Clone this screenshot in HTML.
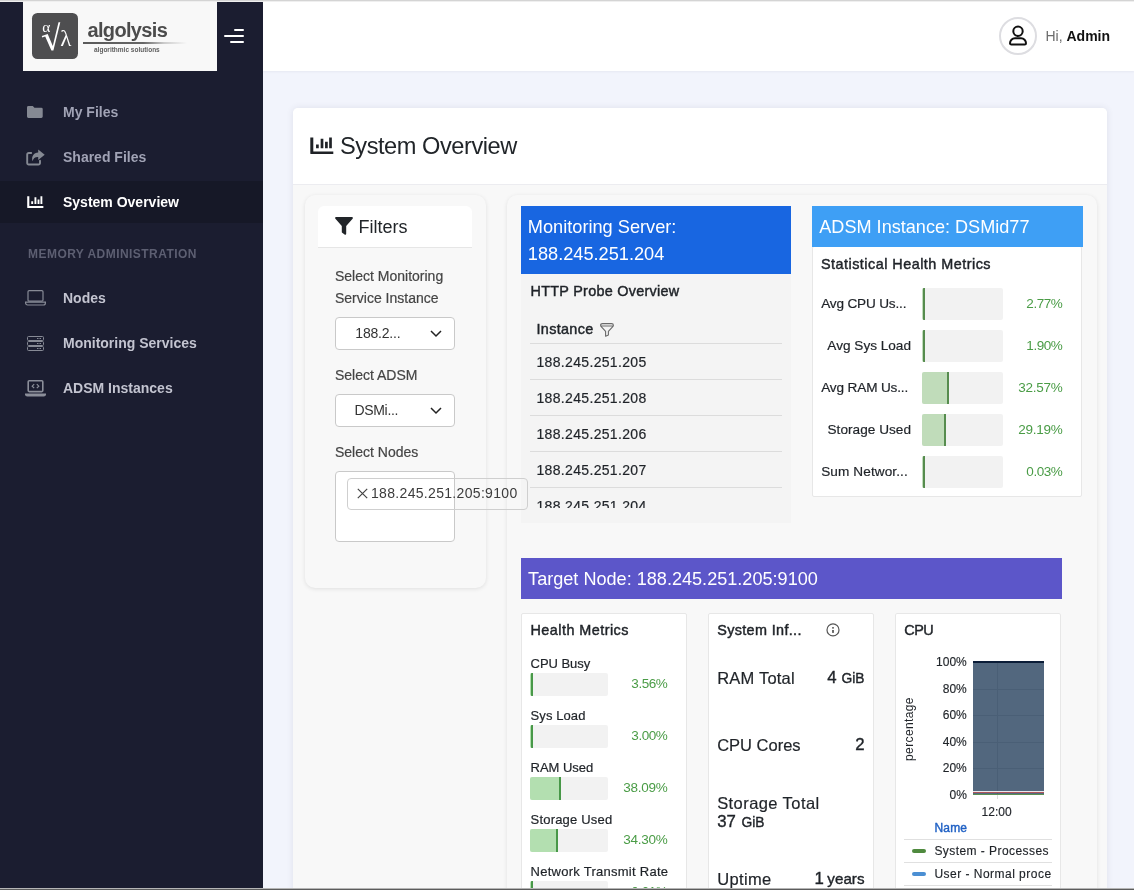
<!DOCTYPE html>
<html>
<head>
<meta charset="utf-8">
<title>System Overview</title>
<style>
*{box-sizing:border-box;margin:0;padding:0}
html,body{width:1134px;height:890px;overflow:hidden}
body{font-family:"Liberation Sans",sans-serif;background:#f2f4fc;position:relative;color:#212529}
#wrap{position:absolute;left:0;top:0;width:1134px;height:890px;overflow:hidden;will-change:transform}
.abs{position:absolute}
.t{position:absolute;white-space:nowrap;line-height:1}
/* sidebar */
#side{left:0;top:0;width:263px;height:890px;background:#1b1d30}
#logo{left:23px;top:2px;width:194px;height:69px;background:#f8f8f8}
#active{left:0;top:181px;width:263px;height:42px;background:#161827}
.mi{font-weight:bold;font-size:14px;color:#a1a3b5;left:63px}
.mi2{font-weight:bold;font-size:14px;color:#c3c4d0;left:63px}
/* header */
#hdr{left:263px;top:0;width:871px;height:71px;background:#fff;box-shadow:0 1px 2px rgba(80,90,120,.07)}
#topline{left:0;top:0;width:1134px;height:1px;background:#d4d4d4;z-index:50}
#topline2{left:0;top:1px;width:1134px;height:1px;background:#efefef;z-index:50}
#botline{left:0;top:888px;width:1134px;height:2px;background:linear-gradient(#b5b5b5 0,#b5b5b5 50%,#5c5c5c 50%,#5c5c5c 100%);z-index:50}
/* card */
#card{left:293px;top:108px;width:814px;height:800px;background:#f8f8f8;border-radius:5px;box-shadow:0 0 7px rgba(60,60,90,.11)}
#cardh{left:0;top:0;width:814px;height:77px;background:#fff;border-radius:5px 5px 0 0;border-bottom:1px solid #ececf0}
.sub{background:#f8f8f8;border-radius:10px;box-shadow:0 1px 4px rgba(0,0,0,.10)}
.lbl{font-size:14px;color:#444;-webkit-text-stroke:.2px #444}
.sel{background:#fff;border:1px solid #c9c9c9;border-radius:4px}
.pt{font-size:14.4px;color:#1f2328;-webkit-text-stroke:.45px #1f2328}
.panel{background:#fff;border:1px solid #e7e7e7;border-radius:2px}
.bar{background:#f2f2f2;border-radius:2px;overflow:hidden}
.fill{position:absolute;left:0;top:0;height:100%;background:#c0dcba;border-right:2.3px solid #568c4e}
.gl{font-size:14px;color:#1f2328;-webkit-text-stroke:.2px #1f2328}
.gv{font-size:14px;color:#4a9c46;text-align:right}
.row{font-size:14px;letter-spacing:.33px;color:#1f2328;-webkit-text-stroke:.2px #1f2328}
.hl{height:1px;background:#dcdcdc}
.si{font-size:16.5px;color:#1f2328;-webkit-text-stroke:.2px #1f2328}
.sv{font-size:16.8px;color:#1f2328;text-align:right;-webkit-text-stroke:.38px #1f2328}
.sv .u{font-size:13.8px}
.sv .u2{font-size:15.2px}
.yl{font-size:12px;color:#1f2328;text-align:right;-webkit-text-stroke:.15px #1f2328}
.lg{font-size:12px;color:#1f2328;letter-spacing:.44px;-webkit-text-stroke:.15px #1f2328}
.gl{font-size:13.6px}
.hl2{font-size:13px}
.f2{background:#b3dfb0;border-right:2.3px solid #489848}
.gv{font-size:13.5px;letter-spacing:-.45px}

</style>
</head>
<body>
<div id="wrap">
<!-- SIDEBAR -->
<div id="side" class="abs">
  <div id="logo" class="abs">
    <div class="abs" style="left:9px;top:10.5px;width:46.3px;height:46.5px;background:#4e4e50;border-radius:5.5px"></div>
    <svg class="abs" style="left:9px;top:10.5px" width="47" height="47" viewBox="0 0 47 47">
      <text x="10.2" y="18.9" font-family="Liberation Serif" font-size="15.5" fill="#fff">α</text>
      <path d="M9.800 23 L15.700 21 L20.800 33 L26.500 9.300 L28.300 9.300 L21.400 37.400 L19.400 37.400 L13.200 23.600 L10.200 24.600 Z" fill="#fff"/>
      <text x="28.2" y="32.9" font-family="Liberation Serif" font-size="23" fill="#fff">λ</text>
    </svg>
    <div class="t" style="left:64.5px;top:17.6px;font-size:20px;font-weight:bold;color:#4c4c4c;letter-spacing:-0.66px">algolysis</div>
    <div class="abs" style="left:59.5px;top:40.2px;width:104px;height:1.5px;background:linear-gradient(90deg,#5a5a5a 0%,#666 58%,rgba(120,120,120,.35) 78%,rgba(120,120,120,0) 100%)"></div>
    <div class="t" style="left:71px;top:45.3px;font-size:6.5px;font-weight:bold;color:#5e5e5e">algorithmic solutions</div>
  </div>
  <!-- hamburger -->
  <div class="abs" style="left:234px;top:29px;width:10.2px;height:2.1px;border-radius:1px;background:#fff"></div>
  <div class="abs" style="left:223.8px;top:35px;width:20.4px;height:2.1px;border-radius:1px;background:#fff"></div>
  <div class="abs" style="left:229.8px;top:41px;width:14.4px;height:2.1px;border-radius:1px;background:#fff"></div>

  <div id="active" class="abs"></div>

  <!-- icons -->
  <svg class="abs" style="left:27.2px;top:105.8px" width="16.2" height="12.2" viewBox="0 0 17 13" preserveAspectRatio="none"><path d="M1.500 0h4.600l1.700 1.800h7.200A1.500 1.500 0 0 1 16.500 3.300v7.900a1.500 1.500 0 0 1-1.500 1.500H1.500A1.500 1.500 0 0 1 0 11.200V1.500A1.500 1.500 0 0 1 1.500 0z" fill="#858993"/></svg>
  <svg class="abs" style="left:25.5px;top:148.5px" width="19" height="17" viewBox="0 0 19 17"><path d="M5.200 4h-2.500a1.500 1.500 0 0 0-1.500 1.500v8.500a1.500 1.500 0 0 0 1.500 1.500h9.800a1.500 1.500 0 0 0 1.500-1.500v-2.200" fill="none" stroke="#858993" stroke-width="1.900" stroke-linecap="round"/><path d="M12.200 0.400L18.700 5.700 12.200 11V7.900C9 7.800 7.200 9 6.600 12.300 5.000 7.500 7.800 3.900 12.200 3.600z" fill="#858993"/></svg>
  <svg class="abs" style="left:27px;top:196px" width="16.500" height="12.300" viewBox="0 0 23.500 17.500"><path d="M1.800 0.400V15.900H23.300" fill="none" stroke="#fff" stroke-width="3" stroke-linejoin="round"/><path d="M7.400 7.600V11.300M12 1.800V11.300M16.400 4.800V11.300M20.500 0.500V11.300" fill="none" stroke="#fff" stroke-width="2.700"/></svg>

  <div class="t mi" style="top:105px">My Files</div>
  <div class="t mi" style="top:150px">Shared Files</div>
  <div class="t mi" style="top:195px;color:#fff">System Overview</div>
  <div class="t" style="left:28px;top:248px;font-size:12px;font-weight:bold;color:#5d5f72;letter-spacing:.46px">MEMORY ADMINISTRATION</div>
  <div class="t mi2" style="top:291px">Nodes</div>
  <div class="t mi2" style="top:336px">Monitoring Services</div>
  <div class="t mi2" style="top:381px">ADSM Instances</div>

  <!-- laptop -->
  <svg class="abs" style="left:25px;top:290px" width="21" height="16" viewBox="0 0 21 16"><rect x="3" y="0.600" width="15" height="10.500" rx="1.200" fill="none" stroke="#878a95" stroke-width="1.200"/><path d="M0.600 12.200h19.800v0.800a2 2 0 0 1-2 2H2.600a2 2 0 0 1-2-2z" fill="none" stroke="#878a95" stroke-width="1.200"/></svg>
  <!-- server -->
  <svg class="abs" style="left:27px;top:335.500px" width="17" height="15" viewBox="0 0 17 15"><g fill="none" stroke="#878a95" stroke-width="1"><rect x="0.500" y="0.500" width="16" height="4" rx="1"/><rect x="0.500" y="5.500" width="16" height="4" rx="1"/><rect x="0.500" y="10.500" width="16" height="4" rx="1"/></g><g fill="#878a95"><rect x="10" y="2" width="1.500" height="1"/><rect x="12.500" y="2" width="1.500" height="1"/><rect x="10" y="7" width="1.500" height="1"/><rect x="12.500" y="7" width="1.500" height="1"/><rect x="10" y="12" width="1.500" height="1"/><rect x="12.500" y="12" width="1.500" height="1"/></g></svg>
  <!-- laptop code -->
  <svg class="abs" style="left:25px;top:380px" width="21" height="17" viewBox="0 0 21 17"><rect x="3.200" y="0.800" width="14.600" height="10.800" rx="1" fill="none" stroke="#8b8e99" stroke-width="1.600"/><path d="M0 13.500h21v0.700a2.300 2.300 0 0 1-2.300 2.300H2.300A2.300 2.300 0 0 1 0 14.200z" fill="#8b8e99"/><path d="M9.200 4.200L7.200 6.200l2 2M11.800 4.200l2 2-2 2" fill="none" stroke="#8b8e99" stroke-width="1.200"/></svg>
</div>

<!-- HEADER -->
<div id="hdr" class="abs"></div>
<div class="abs" style="left:999px;top:17px;width:38px;height:38px;border-radius:50%;border:2px solid #dddde1;background:#fff"></div>
<svg class="abs" style="left:1008px;top:24px" width="20" height="23" viewBox="0 0 20 23"><circle cx="10" cy="7.300" r="4.700" fill="none" stroke="#111" stroke-width="2"/><path d="M2 19.2a4.900 4.900 0 0 1 4.900-4.900h6.200a4.900 4.900 0 0 1 4.900 4.900a1.300 1.300 0 0 1-1.300 1.300H3.300A1.300 1.300 0 0 1 2 19.200z" fill="none" stroke="#111" stroke-width="2" stroke-linejoin="round"/></svg>
<div class="t" style="left:1045.500px;top:29px;font-size:14px;color:#6c6c6c">Hi, <b style="color:#111">Admin</b></div>

<div id="topline" class="abs"></div><div id="topline2" class="abs"></div>

<!-- MAIN CARD -->
<div id="card" class="abs">
  <div id="cardh" class="abs"></div>
</div>
<svg class="abs" style="left:310px;top:136.5px" width="23.5" height="17.5" viewBox="0 0 23.500 17.500"><path d="M1.800 0.400V15.900H23.300" fill="none" stroke="#1f2226" stroke-width="3" stroke-linejoin="round"/><path d="M7.400 7.600V11.300M12 1.800V11.300M16.400 4.800V11.300M20.500 0.500V11.300" fill="none" stroke="#1f2226" stroke-width="2.700"/></svg>
<div class="t" style="left:340px;top:135px;font-size:23.6px;letter-spacing:-.45px;color:#212529">System Overview</div>

<!-- FILTER CARD -->
<div class="abs sub" style="left:304.500px;top:194.500px;width:181.500px;height:393px"></div>
<div class="abs" style="left:318px;top:206px;width:154px;height:42px;background:#fff;border-radius:6px 6px 0 0;border-bottom:1px solid #e6e6e6"></div>
<svg class="abs" style="left:335px;top:217px" width="18" height="18" viewBox="0 0 18 18"><path d="M1.200 0h15.600a1 1 0 0 1 .8 1.700L11.200 9v7.800a1 1 0 0 1-1.600.8l-2.400-1.900a1 1 0 0 1-.4-.8V9L0.400 1.700A1 1 0 0 1 1.200 0z" fill="#212529"/></svg>
<div class="t" style="left:358.500px;top:217.500px;font-size:18px;color:#212529">Filters</div>

<div class="t lbl" style="left:335px;top:269px">Select Monitoring</div>
<div class="t lbl" style="left:335px;top:290.7px">Service Instance</div>
<div class="abs sel" style="left:335px;top:317px;width:120px;height:33px"></div>
<div class="t" style="left:355.3px;top:326.4px;font-size:14px;letter-spacing:-.2px;color:#333">188.2...</div>
<svg class="abs" style="left:430px;top:329.500px" width="12" height="8" viewBox="0 0 12 8"><path d="M1 1l5 5 5-5" fill="none" stroke="#222" stroke-width="1.500"/></svg>

<div class="t lbl" style="left:335px;top:368.1px">Select ADSM</div>
<div class="abs sel" style="left:335px;top:394px;width:120px;height:33px"></div>
<div class="t" style="left:354.4px;top:403.1px;font-size:14px;letter-spacing:-.3px;color:#333">DSMi...</div>
<svg class="abs" style="left:430px;top:406.500px" width="12" height="8" viewBox="0 0 12 8"><path d="M1 1l5 5 5-5" fill="none" stroke="#222" stroke-width="1.500"/></svg>

<div class="t lbl" style="left:335px;top:444.5px">Select Nodes</div>
<div class="abs sel" style="left:335px;top:471px;width:120px;height:71px"></div>

<!-- RIGHT CARD -->
<div class="abs sub" style="left:506.500px;top:194.500px;width:590.500px;height:760px"></div>

<!-- Monitoring server -->
<div class="abs" style="left:521px;top:274px;width:270px;height:249px;background:#f4f4f4"></div>
<div class="abs" style="left:521px;top:206px;width:270px;height:68px;background:#1866e1"></div>
<div class="t" style="left:527.8px;top:218px;font-size:18.2px;color:#fff">Monitoring Server:</div>
<div class="t" style="left:527.8px;top:245px;font-size:18.2px;color:#fff">188.245.251.204</div>
<div class="t pt" style="left:530.5px;top:283.7px;letter-spacing:.28px">HTTP Probe Overview</div>
<div class="t pt" style="left:536.5px;top:321.7px;letter-spacing:.33px">Instance</div>
<svg class="abs" style="left:600px;top:323px" width="14" height="14" viewBox="0 0 14 14"><path d="M2.500 0.600H11.500Q13.400 0.600 13.400 2.200Q13.400 3 12.800 3.600L8.400 8.400V12L5.600 13.200V8.400L1.200 3.600Q0.600 3 0.600 2.200Q0.600 0.600 2.500 0.600ZM1.200 3H12.800" fill="none" stroke="#6a6a6a" stroke-width="1.100" stroke-linejoin="round"/></svg>
<div class="abs hl" style="left:530px;top:343px;width:252px"></div>
<div class="abs hl" style="left:530px;top:379px;width:252px"></div>
<div class="abs hl" style="left:530px;top:415px;width:252px"></div>
<div class="abs hl" style="left:530px;top:451px;width:252px"></div>
<div class="abs hl" style="left:530px;top:487px;width:252px"></div>
<div class="t row" style="left:536.500px;top:355px">188.245.251.205</div>
<div class="t row" style="left:536.500px;top:391px">188.245.251.208</div>
<div class="t row" style="left:536.500px;top:427px">188.245.251.206</div>
<div class="t row" style="left:536.500px;top:463px">188.245.251.207</div>
<div class="abs" style="left:530px;top:488px;width:252px;height:20px;overflow:hidden"><div class="t row" style="left:6.500px;top:11px">188.245.251.204</div></div>

<!-- node tag (over monitoring panel) -->
<div class="abs" style="left:347px;top:477.500px;width:180.500px;height:32px;border:1px solid #cfcfcf;border-radius:4px"></div>
<svg class="abs" style="left:356.500px;top:487.500px" width="11" height="11" viewBox="0 0 11 11"><path d="M0.800 0.800l9.400 9.400M10.200 0.800L0.800 10.200" fill="none" stroke="#444" stroke-width="1.200"/></svg>
<div class="t" style="left:371px;top:486.1px;font-size:14px;letter-spacing:.32px;color:#3c3c3c">188.245.251.205:9100</div>

<!-- ADSM -->
<div class="abs panel" style="left:812px;top:246px;width:270px;height:251px"></div>
<div class="abs" style="left:812px;top:206px;width:271px;height:41px;background:#3e9ff5"></div>
<div class="t" style="left:819.3px;top:218px;font-size:18.1px;color:#fff">ADSM Instance: DSMid77</div>
<div class="t pt" style="left:821px;top:256.7px;letter-spacing:.48px">Statistical Health Metrics</div>
<!-- ADSM rows -->
<div class="t gl" style="left:821.2px;top:296.7px;letter-spacing:-0.18px">Avg CPU Us...</div>
<div class="abs bar" style="left:922px;top:288px;width:81px;height:32px"><div class="fill" style="width:2.5px"></div></div>
<div class="t gv" style="left:1002px;top:296.7px;width:60.4px">2.77%</div>
<div class="t gl" style="left:811px;top:338.7px;width:100px;text-align:right;letter-spacing:0px">Avg Sys Load</div>
<div class="abs bar" style="left:922px;top:330px;width:81px;height:32px"><div class="fill" style="width:2.5px"></div></div>
<div class="t gv" style="left:1002px;top:338.7px;width:60.4px">1.90%</div>
<div class="t gl" style="left:821.2px;top:380.7px;letter-spacing:-0.15px">Avg RAM Us...</div>
<div class="abs bar" style="left:922px;top:372px;width:81px;height:32px"><div class="fill" style="width:27.2px"></div></div>
<div class="t gv" style="left:1002px;top:380.7px;width:60.4px;letter-spacing:-.28px">32.57%</div>
<div class="t gl" style="left:811px;top:422.7px;width:100px;text-align:right;letter-spacing:0.03px">Storage Used</div>
<div class="abs bar" style="left:922px;top:414px;width:81px;height:32px"><div class="fill" style="width:24.4px"></div></div>
<div class="t gv" style="left:1002px;top:422.7px;width:60.4px;letter-spacing:-.28px">29.19%</div>
<div class="t gl" style="left:821.2px;top:464.7px;letter-spacing:0.1px">Sum Networ...</div>
<div class="abs bar" style="left:922px;top:456px;width:81px;height:32px"><div class="fill" style="width:2.5px"></div></div>
<div class="t gv" style="left:1002px;top:464.7px;width:60.4px">0.03%</div>
<!-- Target node -->
<div class="abs" style="left:521px;top:558px;width:541px;height:41px;background:#5c56c9"></div>
<div class="t" style="left:528.1px;top:569.5px;font-size:18.1px;color:#fff">Target Node: 188.245.251.205:9100</div>
<div class="abs panel" style="left:521px;top:613px;width:166px;height:300px"></div>
<div class="t pt" style="left:530.5px;top:622.7px;letter-spacing:.46px">Health Metrics</div>
<div class="t gl hl2" style="left:530.6px;top:656.7px;letter-spacing:-0.06px">CPU Busy</div>
<div class="abs bar" style="left:530.2px;top:673.0px;width:77.7px;height:23px"><div class="fill f2" style="width:2.6px"></div></div>
<div class="t gv" style="left:607px;top:676.6px;width:60.4px">3.56%</div>
<div class="t gl hl2" style="left:530.6px;top:708.7px;letter-spacing:0.08px">Sys Load</div>
<div class="abs bar" style="left:530.2px;top:725.0px;width:77.7px;height:23px"><div class="fill f2" style="width:2.6px"></div></div>
<div class="t gv" style="left:607px;top:728.6px;width:60.4px">3.00%</div>
<div class="t gl hl2" style="left:530.6px;top:760.7px;letter-spacing:-0.03px">RAM Used</div>
<div class="abs bar" style="left:530.2px;top:777.0px;width:77.7px;height:23px"><div class="fill f2" style="width:30.6px"></div></div>
<div class="t gv" style="left:607px;top:780.6px;width:60.4px;letter-spacing:-.28px">38.09%</div>
<div class="t gl hl2" style="left:530.6px;top:812.7px;letter-spacing:0.19px">Storage Used</div>
<div class="abs bar" style="left:530.2px;top:829.0px;width:77.7px;height:23px"><div class="fill f2" style="width:27.7px"></div></div>
<div class="t gv" style="left:607px;top:832.6px;width:60.4px;letter-spacing:-.28px">34.30%</div>
<div class="t gl hl2" style="left:530.6px;top:864.7px;letter-spacing:0.26px">Network Transmit Rate</div>
<div class="abs bar" style="left:530.2px;top:881.0px;width:77.7px;height:23px"><div class="fill f2" style="width:2.6px"></div></div>
<div class="t gv" style="left:607px;top:884.6px;width:60.4px">0.01%</div>
<!-- System info -->
<div class="abs panel" style="left:708px;top:613px;width:166px;height:300px"></div>
<div class="t pt" style="left:717.2px;top:622.7px;letter-spacing:.36px">System Inf...</div>
<svg class="abs" style="left:826px;top:623px" width="14" height="14" viewBox="0 0 14 14"><circle cx="7" cy="6.900" r="6" fill="none" stroke="#555" stroke-width="1.200"/><rect x="6.100" y="7" width="1.800" height="2.900" fill="#5a5a5a"/><rect x="6.100" y="4.100" width="1.800" height="1.500" fill="#5a5a5a"/></svg>
<div class="t si" style="left:717.2px;top:669.5px;letter-spacing:.2px">RAM Total</div>
<div class="t sv" style="left:764px;top:669.5px;width:100.5px">4<span class="u" style="margin-left:5px">GiB</span></div>
<div class="t si" style="left:717.2px;top:736.6px">CPU Cores</div>
<div class="t sv" style="left:764px;top:736.6px;width:100.5px">2</div>
<div class="t si" style="left:717.2px;top:795.2px;letter-spacing:.42px">Storage Total</div>
<div class="t sv" style="left:717.2px;top:813.9px;text-align:left">37<span class="u" style="margin-left:5.6px">GiB</span></div>
<div class="t si" style="left:717.2px;top:871px;letter-spacing:.35px">Uptime</div>
<div class="t sv" style="left:764px;top:870.6px;width:100.5px">1<span class="u2" style="margin-left:3.6px">years</span></div>
<!-- CPU -->
<div class="abs panel" style="left:895px;top:613px;width:166px;height:300px"></div>
<div class="t pt" style="left:904.3px;top:622.7px;letter-spacing:-.5px">CPU</div>
<div class="abs" style="left:973px;top:661px;width:71.1px;height:133.5px;background:#52677e"></div>
<div class="abs" style="left:973px;top:661px;width:71.1px;height:2px;background:#0b1d38"></div>
<div class="abs" style="left:973px;top:689.0px;width:71.1px;height:1px;background:#4a5f76"></div>
<div class="abs" style="left:973px;top:715.3px;width:71.1px;height:1px;background:#4a5f76"></div>
<div class="abs" style="left:973px;top:741.5px;width:71.1px;height:1px;background:#4a5f76"></div>
<div class="abs" style="left:973px;top:767.8px;width:71.1px;height:1px;background:#4a5f76"></div>
<div class="abs" style="left:997px;top:663px;width:1px;height:131px;background:#4a5f76"></div>
<div class="abs" style="left:997px;top:794.5px;width:1px;height:4px;background:#ddd"></div>
<div class="abs" style="left:973px;top:791px;width:71.1px;height:1px;background:#e8e8ee"></div>
<div class="abs" style="left:973px;top:792px;width:71.1px;height:1px;background:#b0555a"></div>
<div class="abs" style="left:973px;top:793.5px;width:71.1px;height:1px;background:#5d8f52"></div>
<div class="t yl" style="left:917px;top:656px;width:49.8px">100%</div>
<div class="t yl" style="left:917px;top:683px;width:49.8px">80%</div>
<div class="t yl" style="left:917px;top:709px;width:49.8px">60%</div>
<div class="t yl" style="left:917px;top:736px;width:49.8px">40%</div>
<div class="t yl" style="left:917px;top:762px;width:49.8px">20%</div>
<div class="t yl" style="left:917px;top:789px;width:49.8px">0%</div>
<div class="t yl" style="left:971.6px;top:806px;width:50px;text-align:center">12:00</div>
<div class="t" style="left:909px;top:729px;font-size:12px;letter-spacing:.38px;color:#1f2328;transform:translate(-50%,-50%) rotate(-90deg)">percentage</div>
<div class="t" style="left:934.4px;top:821.6px;font-size:12px;letter-spacing:.2px;-webkit-text-stroke:.4px #1f60c4;color:#1f60c4">Name</div>
<div class="abs" style="left:904px;top:839px;width:148px;height:1px;background:#e0e0e0"></div>
<div class="abs" style="left:904px;top:862px;width:148px;height:1px;background:#e0e0e0"></div>
<div class="abs" style="left:904px;top:885px;width:148px;height:1px;background:#e0e0e0"></div>
<div class="abs" style="left:911.5px;top:849px;width:14.5px;height:4px;border-radius:2px;background:#4f8a3e"></div>
<div class="abs" style="left:911.5px;top:872px;width:14.5px;height:4px;border-radius:2px;background:#4b8fd3"></div>
<div class="abs" style="left:934.4px;top:843px;width:117.6px;height:40px;overflow:hidden"><div class="t lg" style="left:0;top:1.5px">System - Processes</div><div class="t lg" style="left:0;top:24.5px;letter-spacing:.48px">User - Normal proce</div></div>
<div id="botline" class="abs"></div>
</div>
</body>
</html>
